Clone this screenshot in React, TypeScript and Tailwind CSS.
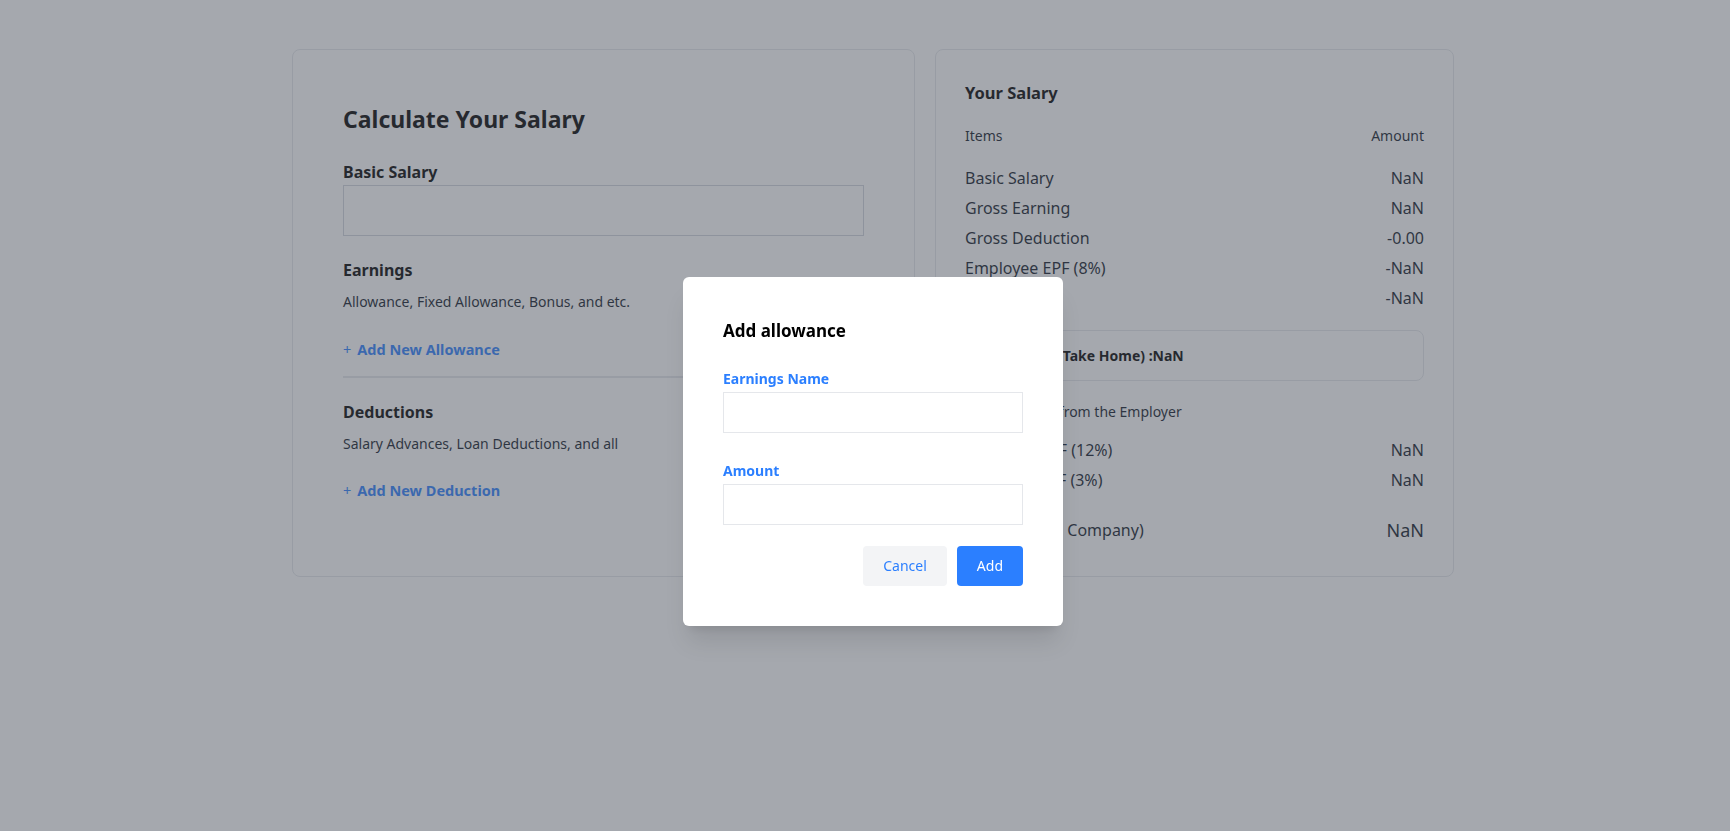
import React from "react";

const ROWS = [
  { label: "Basic Salary", value: "NaN" },
  { label: "Gross Earning", value: "NaN" },
  { label: "Gross Deduction", value: "-0.00" },
  { label: "Employee EPF (8%)", value: "-NaN" },
  { label: "APIT", value: "-NaN" },
];

const EMPLOYER = [
  { label: "Employer EPF (12%)", value: "NaN" },
  { label: "Employer ETF (3%)", value: "NaN" },
];

export default function App() {
  return (
    <div className="relative min-h-screen bg-white font-['Noto_Sans',sans-serif] text-gray-900">
      <div className="flex gap-5 pl-[292px] pt-[49px]">
        <SalaryForm />
        <SalarySummary />
      </div>

      {/* backdrop */}
      <div className="fixed inset-0 bg-[rgba(75,82,94,0.5)]" />

      <AllowanceModal />
    </div>
  );
}

function SalaryForm() {
  return (
    <div className="h-[528px] w-[623px] rounded-lg border border-gray-200 bg-white px-[50px] pt-[53px]">
      <h1 className="text-[23px] font-bold leading-8 text-black">Calculate Your Salary</h1>

      <label className="mt-[25px] block text-base font-bold leading-6 text-black">Basic Salary</label>
      <input className="mt-[1px] block h-[51px] w-full border border-gray-300 bg-white px-3 outline-none" />

      <h2 className="mt-[22px] text-base font-bold leading-6 text-black">Earnings</h2>
      <p className="mt-[10px] text-sm leading-5">Allowance, Fixed Allowance, Bonus, and etc.</p>
      <AddLink className="mt-[27px]">Add New Allowance</AddLink>

      <div className="mt-[17px] h-[2px] w-full bg-gray-200" />

      <h2 className="mt-[22px] text-base font-bold leading-6 text-black">Deductions</h2>
      <p className="mt-[10px] text-sm leading-5">Salary Advances, Loan Deductions, and all</p>
      <AddLink className="mt-[26px]">Add New Deduction</AddLink>
    </div>
  );
}

function AddLink({ children, className }: { children: React.ReactNode; className?: string }) {
  return (
    <button className={"flex items-center gap-[6px] text-[14.5px] leading-5 text-blue-500 " + (className ?? "")}>
      <span className="font-normal">+</span>
      <span className="font-bold">{children}</span>
    </button>
  );
}

function SalarySummary() {
  return (
    <div className="h-[528px] w-[519px] rounded-lg border border-gray-200 bg-white px-[29px] pt-[29px]">
      <h2 className="text-[16.5px] font-bold leading-7 text-black">Your Salary</h2>

      <div className="mt-[19px] flex justify-between text-sm leading-5">
        <span>Items</span>
        <span>Amount</span>
      </div>

      <div className="mt-[17px]">
        {ROWS.map((r) => (
          <div key={r.label} className="flex h-[30px] items-center justify-between text-base text-gray-900">
            <span>{r.label}</span>
            <span>{r.value}</span>
          </div>
        ))}
      </div>

      <div className="mt-[17px] flex h-[51px] items-center rounded-lg border border-gray-200 pl-4 text-sm font-bold text-black">
        Net Salary (Take Home) :NaN
      </div>

      <p className="mt-[21px] text-sm leading-5">Contributions from the Employer</p>

      <div className="mt-[13px]">
        {EMPLOYER.map((r) => (
          <div key={r.label} className="flex h-[30px] items-center justify-between text-base text-gray-900">
            <span>{r.label}</span>
            <span>{r.value}</span>
          </div>
        ))}
      </div>

      <div className="mt-[21px] flex h-7 items-center justify-between text-gray-900">
        <span className="text-base">Total (Cost to Company)</span>
        <span className="text-lg">NaN</span>
      </div>
    </div>
  );
}

function AllowanceModal() {
  return (
    <div className="absolute left-[683px] top-[277px] w-[380px] rounded-md bg-white p-10 shadow-xl">
      <h3 className="text-[17px] font-bold leading-7 text-black">Add allowance</h3>

      <label className="mt-6 block text-sm font-bold leading-5 text-blue-500">Earnings Name</label>
      <input className="mt-[3px] block h-[41px] w-full border border-gray-200 px-3 outline-none" />

      <label className="mt-7 block text-sm font-bold leading-5 text-blue-500">Amount</label>
      <input className="mt-[3px] block h-[41px] w-full border border-gray-200 px-3 outline-none" />

      <div className="mt-[21px] flex justify-end gap-2.5">
        <button className="h-10 rounded bg-gray-100 px-5 text-sm text-blue-500">Cancel</button>
        <button className="h-10 rounded bg-blue-500 px-5 text-sm text-white">Add</button>
      </div>
    </div>
  );
}
